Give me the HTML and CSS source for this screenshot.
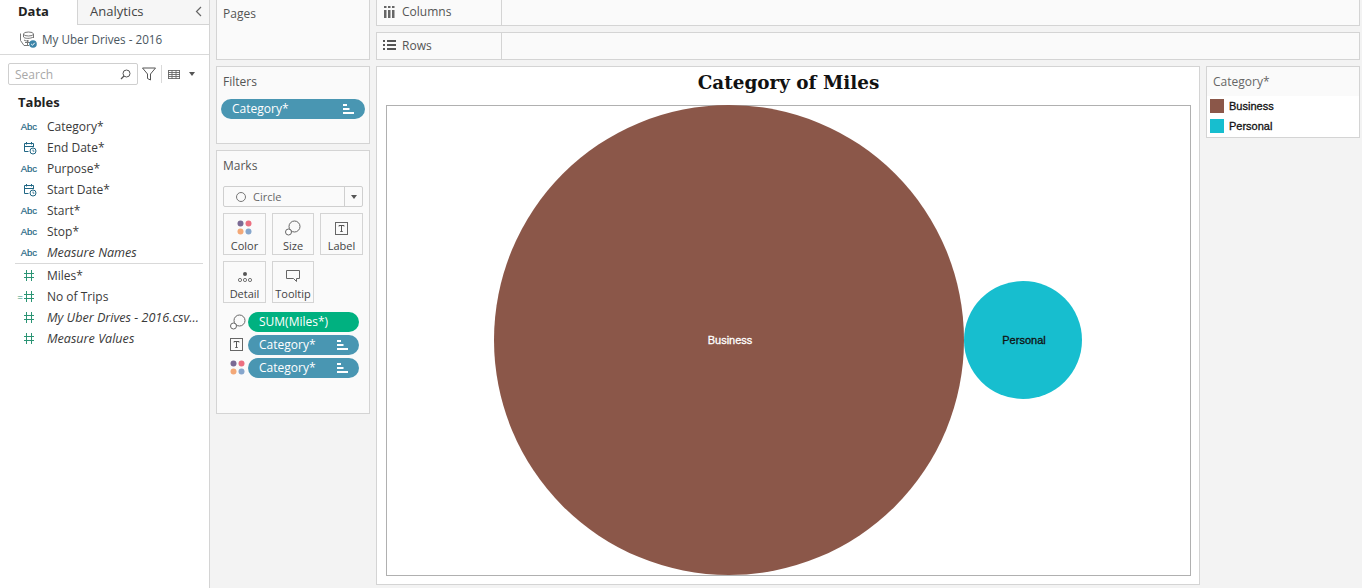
FILE: index.html
```html
<!DOCTYPE html>
<html lang="en">
<head>
    <meta charset="UTF-8">
    <meta name="viewport" content="width=device-width, initial-scale=1.0">
    <title>Category of Miles</title>
    <link rel="stylesheet" href="styles.css">
</head>
<body>
    <svg class="defs" width="0" height="0">
        <symbol id="i-date" viewBox="0 0 14 14">
            <path d="M1.500 2.500h9v3.500M1.500 2.500v8h4M1.500 5.500h9M3.500 1v2.500M8.500 1v2.500" fill="none" stroke="#1f6684"/>
            <circle cx="10" cy="10" r="3" fill="#fff" stroke="#1f6684"/>
            <path d="M10 8.500v1.700h1.400" fill="none" stroke="#1f6684" stroke-width=".8"/>
        </symbol>
        <symbol id="i-hash" viewBox="0 0 12 12">
            <path d="M3.500 0v11M8.500 0v11M1 3.500h10M1 7.500h10" fill="none" stroke="#2b9474"/>
        </symbol>
        <symbol id="i-sort" viewBox="0 0 11 10">
            <path d="M0 0h4v2H0zM0 4h6.500v2H0zM0 8h11v2H0z" fill="#fff"/>
        </symbol>
        <symbol id="i-color" viewBox="0 0 16 16">
            <circle cx="3.500" cy="3.500" r="3" fill="#7b6a94"/>
            <circle cx="11.500" cy="3.500" r="3" fill="#ec6f80"/>
            <circle cx="3.500" cy="11.500" r="3" fill="#f3a877"/>
            <circle cx="11.500" cy="11.500" r="3" fill="#86a6cc"/>
        </symbol>
        <symbol id="i-size" viewBox="0 0 16 16">
            <circle cx="9.500" cy="6.500" r="5.500" fill="none" stroke="#666"/>
            <circle cx="3.500" cy="12" r="3" fill="#fff" stroke="#666"/>
        </symbol>
        <symbol id="i-label" viewBox="0 0 14 14">
            <rect x=".5" y=".5" width="12" height="12" fill="none" stroke="#666"/>
            <path d="M4 4.500V3.500h5v1M6.500 3.500v6M5.300 9.500h2.400" fill="none" stroke="#555"/>
        </symbol>
    </svg>

    <div class="app">
        <aside class="sidebar">
            <div class="tabs">
                <div class="tab tab-active">Data</div>
                <div class="tab tab-other">Analytics <span class="collapse">
                    <svg width="7" height="11" viewBox="0 0 7 11"><path d="M6 1 1.500 5.500 6 10" fill="none" stroke="#666" stroke-width="1.200"/></svg>
                </span></div>
            </div>
            <div class="source">
                <svg class="source-icon" width="17" height="17" viewBox="0 0 17 17">
                    <ellipse cx="8.500" cy="3" rx="5" ry="2" fill="none" stroke="#777"/>
                    <path d="M3.500 3v3M13.500 3v4M3.500 6c1 1.800 7 1.800 10 0M.5 2.500v7l3.500 5h5M4 9c1.500 1 3 1 5 1" fill="none" stroke="#777"/>
                    <path d="M5 11.500h5M7.500 9v5" fill="none" stroke="#777"/>
                    <circle cx="13" cy="13" r="3.800" fill="#3b84a8"/>
                    <path d="M11.200 13l1.300 1.300 2.200-2.500" fill="none" stroke="#fff"/>
                </svg>
                <span class="source-name">My Uber Drives - 2016</span>
            </div>
            <div class="search-row">
                <div class="search">
                    <span class="search-text">Search</span>
                    <svg width="11" height="11" viewBox="0 0 11 11"><circle cx="6.500" cy="4.500" r="3.500" fill="none" stroke="#555"/><path d="M4 7 1 10" stroke="#555" stroke-width="1.300"/></svg>
                </div>
                <svg class="funnel" width="14" height="14" viewBox="0 0 14 14"><path d="M.5 1h13L8.500 7v6l-3-1.500V7z" fill="none" stroke="#555"/></svg>
                <span class="divider"></span>
                <svg class="grid-icon" width="12" height="9" viewBox="0 0 12 9"><path d="M0 .5h12M0 2.500h12M0 4.500h12M0 6.500h12M0 8.500h12M.5 0v9M4 0v9M8 0v9M11.500 0v9" fill="none" stroke="#666" stroke-width=".9"/></svg>
                <span class="caret"></span>
            </div>
            <h2 class="tables-title">Tables</h2>
            <ul class="fields">
                <li class="field"><span class="field-icon abc">Abc</span>Category*</li>
                <li class="field"><span class="field-icon"><svg width="14" height="14"><use href="#i-date"/></svg></span>End Date*</li>
                <li class="field"><span class="field-icon abc">Abc</span>Purpose*</li>
                <li class="field"><span class="field-icon"><svg width="14" height="14"><use href="#i-date"/></svg></span>Start Date*</li>
                <li class="field"><span class="field-icon abc">Abc</span>Start*</li>
                <li class="field"><span class="field-icon abc">Abc</span>Stop*</li>
                <li class="field field-gen"><span class="field-icon abc">Abc</span>Measure Names</li>
            </ul>
            <ul class="fields fields-measures">
                <li class="field"><span class="field-icon icon-hash"><svg width="12" height="12"><use href="#i-hash"/></svg></span>Miles*</li>
                <li class="field"><span class="field-icon icon-hash"><span class="calc">=</span><svg width="12" height="12"><use href="#i-hash"/></svg></span>No of Trips</li>
                <li class="field field-gen"><span class="field-icon icon-hash"><svg width="12" height="12"><use href="#i-hash"/></svg></span><span class="clip">My Uber Drives - 2016.csv...</span></li>
                <li class="field field-gen"><span class="field-icon icon-hash"><svg width="12" height="12"><use href="#i-hash"/></svg></span>Measure Values</li>
            </ul>
        </aside>

        <div class="shelves">
            <section class="card pages"><h3 class="card-title">Pages</h3></section>
            <section class="card filters">
                <h3 class="card-title">Filters</h3>
                <div class="pill pill-blue pill-wide">Category*<svg width="11" height="10"><use href="#i-sort"/></svg></div>
            </section>
            <section class="card marks">
                <h3 class="card-title">Marks</h3>
                <div class="mark-type">
                    <span class="mark-type-main"><span class="ring"></span>Circle</span>
                    <span class="mark-type-arrow"><span class="caret"></span></span>
                </div>
                <div class="mark-grid">
                    <div class="mark-btn"><svg width="16" height="16"><use href="#i-color"/></svg>Color</div>
                    <div class="mark-btn"><svg width="16" height="16"><use href="#i-size"/></svg>Size</div>
                    <div class="mark-btn"><svg width="14" height="14"><use href="#i-label"/></svg>Label</div>
                    <div class="mark-btn">
                        <svg width="16" height="16" viewBox="0 0 16 16"><circle cx="8" cy="6" r="2" fill="#555"/><circle cx="3" cy="12" r="1.600" fill="none" stroke="#555" stroke-width=".8"/><circle cx="8" cy="12" r="1.600" fill="none" stroke="#555" stroke-width=".8"/><circle cx="13" cy="12" r="1.600" fill="none" stroke="#555" stroke-width=".8"/></svg>
                        Detail
                    </div>
                    <div class="mark-btn">
                        <svg width="16" height="16" viewBox="0 0 16 16"><path d="M1.500 2.500h13v8h-3v3l-3-3h-7z" fill="none" stroke="#666"/></svg>
                        Tooltip
                    </div>
                </div>
                <div class="encodings">
                    <div class="encoding"><svg width="16" height="16"><use href="#i-size"/></svg><div class="pill pill-green">SUM(Miles*)</div></div>
                    <div class="encoding"><svg width="14" height="14"><use href="#i-label"/></svg><div class="pill pill-blue">Category*<svg width="11" height="10"><use href="#i-sort"/></svg></div></div>
                    <div class="encoding"><svg width="16" height="16"><use href="#i-color"/></svg><div class="pill pill-blue">Category*<svg width="11" height="10"><use href="#i-sort"/></svg></div></div>
                </div>
            </section>
        </div>

        <main class="workspace">
            <div class="shelf shelf-columns">
                <div class="shelf-label">
                    <svg width="11" height="12" viewBox="0 0 11 12"><path d="M0 0h2.500v2H0zM4 0h2.500v2H4zM8 0h2.500v2H8zM0 4h2.500v8H0zM4 4h2.500v8H4zM8 4h2.500v8H8z" fill="#666"/></svg>
                    Columns
                </div>
            </div>
            <div class="shelf shelf-rows">
                <div class="shelf-label">
                    <svg width="13" height="10" viewBox="0 0 13 10"><path d="M0 0h2v2H0zM4 0h9v2H4zM0 4h2v2H0zM4 4h9v2H4zM0 8h2v2H0zM4 8h9v2H4z" fill="#555"/></svg>
                    Rows
                </div>
            </div>
            <div class="view-row">
                <section class="view">
                    <h1 class="view-title">Category of Miles</h1>
                    <div class="plot">
                        <div class="bubble bubble-business">Business</div>
                        <div class="bubble bubble-personal">Personal</div>
                    </div>
                </section>
                <aside class="legend">
                    <div class="legend-title">Category*</div>
                    <div class="legend-item"><span class="swatch swatch-business"></span>Business</div>
                    <div class="legend-item"><span class="swatch swatch-personal"></span>Personal</div>
                </aside>
            </div>
        </main>
    </div>
</body>
</html>
```

FILE: styles.css
```css
* {
    box-sizing: border-box;
}

html, body {
    margin: 0;
    padding: 0;
    height: 100%;
    overflow: hidden;
}

body {
    font-family: "Open Sans", "Noto Sans", sans-serif;
    font-size: 12px;
    color: #333;
    background: #f3f3f3;
}

.defs {
    position: absolute;
}

.app {
    display: flex;
    height: 588px;
}

/* data pane */
.sidebar {
    width: 210px;
    flex: none;
    background: #fff;
    border-right: 1px solid #d4d4d4;
}

.tabs {
    display: flex;
    height: 25px;
}

.tab {
    font-size: 13px;
    line-height: 23px;
}

.tab-active {
    width: 78px;
    padding-left: 18px;
    font-weight: 700;
    color: #222;
    border-right: 1px solid #d4d4d4;
}

.tab-other {
    flex: 1;
    display: flex;
    justify-content: space-between;
    padding: 0 7px 0 12px;
    background: #f6f6f6;
    border-bottom: 1px solid #d4d4d4;
    color: #444;
}

.collapse {
    display: flex;
    align-items: center;
    margin-top: -2px;
}

.source {
    display: flex;
    align-items: center;
    height: 30px;
    padding: 0 0 1px 20px;
    border-bottom: 1px solid #d9d9d9;
}

.source-icon {
    margin-right: 5px;
}

.source-name {
    font-size: 11.7px;
    color: #4a5660;
}

.search-row {
    display: flex;
    align-items: center;
    padding: 8px 0 0 8px;
}

.search {
    display: flex;
    align-items: center;
    justify-content: space-between;
    width: 130px;
    height: 22px;
    padding: 0 6px;
    border: 1px solid #cfcfcf;
    border-radius: 2px;
}

.search-text {
    color: #a8a8a8;
}

.funnel {
    margin-left: 4px;
}

.divider {
    width: 1px;
    height: 18px;
    margin: 0 6px 0 5px;
    background: #d9d9d9;
}

.grid-icon {
    margin-right: 9px;
}

.caret {
    width: 0;
    height: 0;
    border-left: 3.5px solid transparent;
    border-right: 3.5px solid transparent;
    border-top: 4px solid #555;
}

.tables-title {
    margin: 8px 0 0 18px;
    font-size: 13px;
    line-height: 18px;
    color: #222;
}

.fields {
    list-style: none;
    margin: 5px 6px 0 0;
    padding: 0;
}

.fields-measures {
    margin-top: 0;
    margin-left: 15px;
    padding-top: 1px;
    border-top: 1px solid #d9d9d9;
}

.fields-measures .field {
    margin-left: -15px;
    margin-right: -6px;
}

.field {
    display: flex;
    align-items: center;
    height: 21px;
    color: #3a3a3a;
    white-space: nowrap;
}

.field-gen {
    font-style: italic;
    font-size: 12.6px;
}

.field-icon {
    display: flex;
    align-items: center;
    justify-content: flex-end;
    width: 37px;
    flex: none;
    margin-right: 10px;
    font-style: normal;
}

.icon-hash {
    width: 35px;
    margin-right: 12px;
}

.abc {
    font-family: "Liberation Sans", sans-serif;
    font-size: 9.5px;
    color: #1f6684;
    -webkit-text-stroke: 0.2px #1f6684;
}

.calc {
    font-size: 10px;
    line-height: 10px;
    color: #2b9474;
}

.clip {
    width: 153px;
    overflow: hidden;
}

/* shelves */
.shelves {
    width: 154px;
    flex: none;
    margin: 0 6px;
    display: flex;
    flex-direction: column;
    gap: 6px;
}

.card {
    background: #fafafa;
    border: 1px solid #d4d4d4;
    padding: 0 6px;
}

.card-title {
    margin: 0;
    font-size: 12px;
    font-weight: 400;
    line-height: 16px;
    color: #555;
}

.pages {
    height: 61px;
    margin-top: -1px;
    padding-top: 6px;
}

.filters {
    height: 78px;
    padding: 7px 4px 0;
}

.filters .card-title {
    margin-left: 2px;
}

.marks {
    height: 264px;
    padding-top: 7px;
}

.pill {
    display: flex;
    align-items: center;
    justify-content: space-between;
    height: 20px;
    border-radius: 10px;
    padding: 0 6px 1px 11px;
    color: #fff;
    font-size: 12px;
}

.pill-blue {
    background: #4996b2;
}

.pill-green {
    background: #00b180;
}

.pill-wide {
    margin-top: 9px;
    padding-right: 11px;
}

.mark-type {
    display: flex;
    height: 21px;
    margin-top: 12px;
    border: 1px solid #cfcfcf;
    border-radius: 2px;
    color: #666;
    font-size: 11px;
}

.mark-type-main {
    flex: 1;
    display: flex;
    align-items: center;
    padding-left: 12px;
}

.ring {
    width: 10px;
    height: 10px;
    margin-right: 7px;
    border: 1px solid #777;
    border-radius: 50%;
}

.mark-type-arrow {
    width: 18px;
    display: flex;
    align-items: center;
    justify-content: center;
    border-left: 1px solid #cfcfcf;
}

.mark-grid {
    display: grid;
    grid-template-columns: 43px 42px 43px;
    gap: 6px;
    margin-top: 6px;
}

.mark-btn {
    display: flex;
    flex-direction: column;
    align-items: center;
    justify-content: flex-end;
    gap: 2px;
    height: 42px;
    padding-bottom: 1px;
    background: #fafafa;
    border: 1px solid #d4d4d4;
    font-size: 11px;
    line-height: 15px;
    color: #444;
    white-space: nowrap;
}

.encodings {
    display: flex;
    flex-direction: column;
    gap: 3px;
    margin-top: 9px;
}

.encoding {
    display: flex;
    align-items: center;
    justify-content: space-between;
    padding-left: 7px;
    padding-right: 4px;
}

.encoding .pill {
    width: 111px;
    padding-right: 11px;
}

/* columns, rows and the view */
.workspace {
    flex: 1;
    min-width: 0;
    display: flex;
    flex-direction: column;
    padding-right: 2px;
}

.shelf {
    background: #fafafa;
    border: 1px solid #d4d4d4;
}

.shelf-columns {
    height: 27px;
    margin-top: -1px;
}

.shelf-rows {
    height: 28px;
    margin-top: 6px;
}

.shelf-label {
    display: flex;
    align-items: center;
    width: 125px;
    height: 100%;
    border-right: 1px solid #d4d4d4;
    color: #555;
}

.shelf-columns .shelf-label {
    gap: 7px;
    padding: 0 0 2px 7px;
}

.shelf-rows .shelf-label {
    gap: 6px;
    padding: 0 0 2px 6px;
}

.view-row {
    display: flex;
    gap: 6px;
    margin-top: 6px;
    align-items: flex-start;
}

.view {
    width: 824px;
    height: 519px;
    flex: none;
    background: #fff;
    border: 1px solid #d4d4d4;
    padding: 0 8px 0 9px;
}

.view-title {
    margin: 0;
    height: 38px;
    font-family: "DejaVu Serif", serif;
    font-size: 18.4px;
    line-height: 32px;
    font-weight: 700;
    text-align: center;
    color: #111;
}

.plot {
    position: relative;
    height: 471px;
    border: 1px solid #b0b0b0;
}

.bubble {
    position: absolute;
    display: flex;
    align-items: center;
    justify-content: center;
    padding-left: 2px;
    border-radius: 50%;
    font-family: "Liberation Sans", sans-serif;
    font-size: 11px;
    -webkit-text-stroke: 0.3px;
}

.bubble-business {
    left: 107px;
    top: -1px;
    width: 470px;
    height: 470px;
    background: #8b5749;
    color: #fff;
}

.bubble-personal {
    left: 577px;
    top: 175px;
    width: 118px;
    height: 118px;
    background: #17becf;
    color: #111;
}

.legend {
    flex: 1;
    height: 72px;
    background: #fff;
    border: 1px solid #d4d4d4;
}

.legend-title {
    height: 29px;
    padding-left: 6px;
    line-height: 29px;
    background: #fafafa;
    color: #666;
}

.legend-item {
    display: flex;
    align-items: center;
    gap: 5px;
    height: 20px;
    padding-left: 3px;
    font-family: "Liberation Sans", sans-serif;
    font-size: 11px;
    -webkit-text-stroke: 0.3px;
    color: #111;
}

.swatch {
    width: 14px;
    height: 14px;
}

.swatch-business {
    background: #8b5749;
}

.swatch-personal {
    background: #17becf;
}
```
